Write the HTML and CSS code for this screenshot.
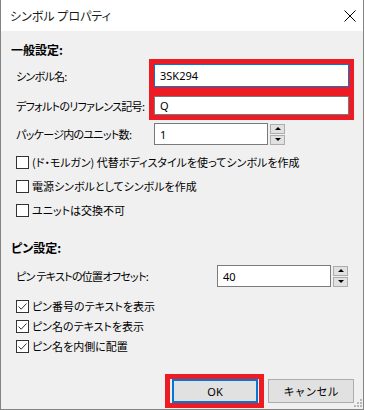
FILE: index.html
```html
<!DOCTYPE html>
<html lang="ja">
<head>
  <meta charset="UTF-8" />
  <meta name="viewport" content="width=device-width, initial-scale=1.0"/>
  <title>シンボル プロパティ</title>
  <link rel="stylesheet" href="styles.css">
</head>
<body>
  <div class="window">
    <div class="titlebar">
      <span class="title">シンボル プロパティ</span>
      <svg class="close" width="12" height="12" viewBox="0 0 12 12">
        <path d="M0.5 0.5 L11.5 11.5 M11.5 0.5 L0.5 11.5" stroke="#000" stroke-width="1" fill="none"/>
      </svg>
    </div>

    <div class="content">
      <div class="group-title">一般設定:</div>

      <div class="field row-name">
        <label class="field-label">シンボル名:</label>
        <input class="text wide focused mark" type="text" value="3SK294">
      </div>

      <div class="field row-ref">
        <label class="field-label">デフォルトのリファレンス記号:</label>
        <input class="text wide mark" type="text" value="Q">
      </div>

      <div class="field row-units">
        <label class="field-label">パッケージ内のユニット数:</label>
        <input class="text narrow" type="text" value="1">
        <div class="spin">
          <div class="spin-btn"><span class="arrow-up"></span></div>
          <div class="spin-btn"><span class="arrow-down"></span></div>
        </div>
      </div>

      <div class="checks">
        <div class="check"><span class="box"></span>(ド・モルガン) 代替ボディスタイルを使ってシンボルを作成</div>
        <div class="check"><span class="box"></span>電源シンボルとしてシンボルを作成</div>
        <div class="check"><span class="box"></span>ユニットは交換不可</div>
      </div>

      <div class="group-title pin-title">ピン設定:</div>

      <div class="field row-offset">
        <label class="field-label offset-label">ピン テキストの位置オフセット:</label>
        <input class="text narrow" type="text" value="40">
        <div class="spin">
          <div class="spin-btn"><span class="arrow-up"></span></div>
          <div class="spin-btn"><span class="arrow-down"></span></div>
        </div>
      </div>

      <div class="checks checks-pin">
        <div class="check"><span class="box"><svg width="11" height="11" viewBox="0 0 11 11"><path d="M1.5 5.5 L4.2 8.2 L9.5 2.5" stroke="#333" stroke-width="1" fill="none"/></svg></span>ピン番号のテキストを表示</div>
        <div class="check"><span class="box"><svg width="11" height="11" viewBox="0 0 11 11"><path d="M1.5 5.5 L4.2 8.2 L9.5 2.5" stroke="#333" stroke-width="1" fill="none"/></svg></span>ピン名のテキストを表示</div>
        <div class="check"><span class="box"><svg width="11" height="11" viewBox="0 0 11 11"><path d="M1.5 5.5 L4.2 8.2 L9.5 2.5" stroke="#333" stroke-width="1" fill="none"/></svg></span>ピン名を内側に配置</div>
      </div>

      <div class="actions">
        <div class="mark ok-mark">
          <button class="btn default">OK</button>
        </div>
        <button class="btn">キャンセル</button>
      </div>

      <svg class="grip" width="8" height="8" viewBox="0 0 8 8">
        <rect x="6" y="0" width="2" height="2" fill="#b8b8b8"/>
        <rect x="3" y="3" width="2" height="2" fill="#b8b8b8"/>
        <rect x="6" y="3" width="2" height="2" fill="#b8b8b8"/>
        <rect x="0" y="6" width="2" height="2" fill="#b8b8b8"/>
        <rect x="3" y="6" width="2" height="2" fill="#b8b8b8"/>
        <rect x="6" y="6" width="2" height="2" fill="#b8b8b8"/>
      </svg>
    </div>
  </div>
</body>
</html>
```

FILE: styles.css
```css
:root {
  --dialog-bg: #f0f0f0;
  --frame-color: #838383;
  --input-border: #7a7a7a;
  --focus-color: #0078d7;
  --btn-bg: #e1e1e1;
  --btn-border: #adadad;
  --mark-color: #ed1c24;
  --font-family: "Noto Sans CJK JP", "Noto Sans", sans-serif;
}

* {
  box-sizing: border-box;
}

html, body {
  margin: 0;
  padding: 0;
  background: #fff;
  color: #000;
  font-family: var(--font-family);
  font-size: 11px;
  font-feature-settings: "palt";
}

.window {
  width: 364px;
  height: 410px;
  border: 1px solid var(--frame-color);
  border-top: none;
  display: flex;
  flex-direction: column;
}

.titlebar {
  height: 31px;
  flex: none;
  display: flex;
  align-items: center;
  justify-content: space-between;
  padding: 0 7px 0 9px;
  background: #fff;
}

.title {
  font-size: 12px;
  color: #1a1a1a;
}

.content {
  position: relative;
  flex: 1;
  background: var(--dialog-bg);
  padding: 9px 0 0 10px;
}

.group-title {
  height: 20px;
  line-height: 20px;
  font-size: 12px;
  font-weight: 700;
}

.pin-title {
  margin-top: 16px;
}

.field {
  display: flex;
  align-items: center;
  padding-left: 5px;
}

.field-label {
  width: 138px;
  white-space: nowrap;
  letter-spacing: -0.7px;
}

.offset-label {
  width: 201px;
}

.row-name {
  margin-top: 4px;
}

.row-ref {
  margin-top: 9px;
}

.row-units {
  margin-top: 8px;
}

.row-offset {
  margin-top: 7px;
}

.text {
  height: 22px;
  margin: 0;
  padding: 0 5px;
  border: 1px solid var(--input-border);
  background: #fff;
  font-family: "Noto Sans", sans-serif;
  font-size: 11px;
  color: #000;
}

.text.wide {
  width: 195px;
}

.text.narrow {
  width: 114px;
}

.row-name .text {
  height: 23px;
}

.row-ref .text {
  height: 19px;
}

.text.focused {
  border-color: var(--focus-color);
}

.mark {
  outline: 5px solid var(--mark-color);
}

.spin {
  display: flex;
  flex-direction: column;
  gap: 1px;
  margin-left: 2px;
}

.spin-btn {
  width: 15px;
  height: 10px;
  background: var(--btn-bg);
  border: 1px solid var(--btn-border);
  display: flex;
  align-items: center;
  justify-content: center;
}

.arrow-up {
  border-left: 3px solid transparent;
  border-right: 3px solid transparent;
  border-bottom: 3px solid #000;
}

.arrow-down {
  border-left: 3px solid transparent;
  border-right: 3px solid transparent;
  border-top: 3px solid #000;
}

.checks {
  margin-top: 5px;
  padding-left: 5px;
}

.check {
  height: 24px;
  display: flex;
  align-items: center;
  gap: 3px;
  white-space: nowrap;
}

.checks-pin {
  margin-top: 9px;
}

.checks-pin .check {
  height: 20px;
}

.box {
  width: 13px;
  height: 13px;
  flex: none;
  border: 1px solid #333;
  background: #fff;
  display: flex;
}

.actions {
  margin-top: 23px;
  display: flex;
  justify-content: flex-end;
  align-items: center;
  gap: 9px;
  padding-right: 9px;
}

.ok-mark {
  padding: 0 1px 0 2px;
  display: flex;
}

.btn {
  width: 86px;
  height: 24px;
  margin: 0;
  padding: 0;
  background: var(--btn-bg);
  border: 1px solid var(--btn-border);
  font-family: "Noto Sans", "Noto Sans CJK JP", sans-serif;
  font-size: 11px;
  color: #000;
}

.btn.default {
  border: 2px solid var(--focus-color);
}

.grip {
  position: absolute;
  right: 1px;
  bottom: 2px;
}
```
